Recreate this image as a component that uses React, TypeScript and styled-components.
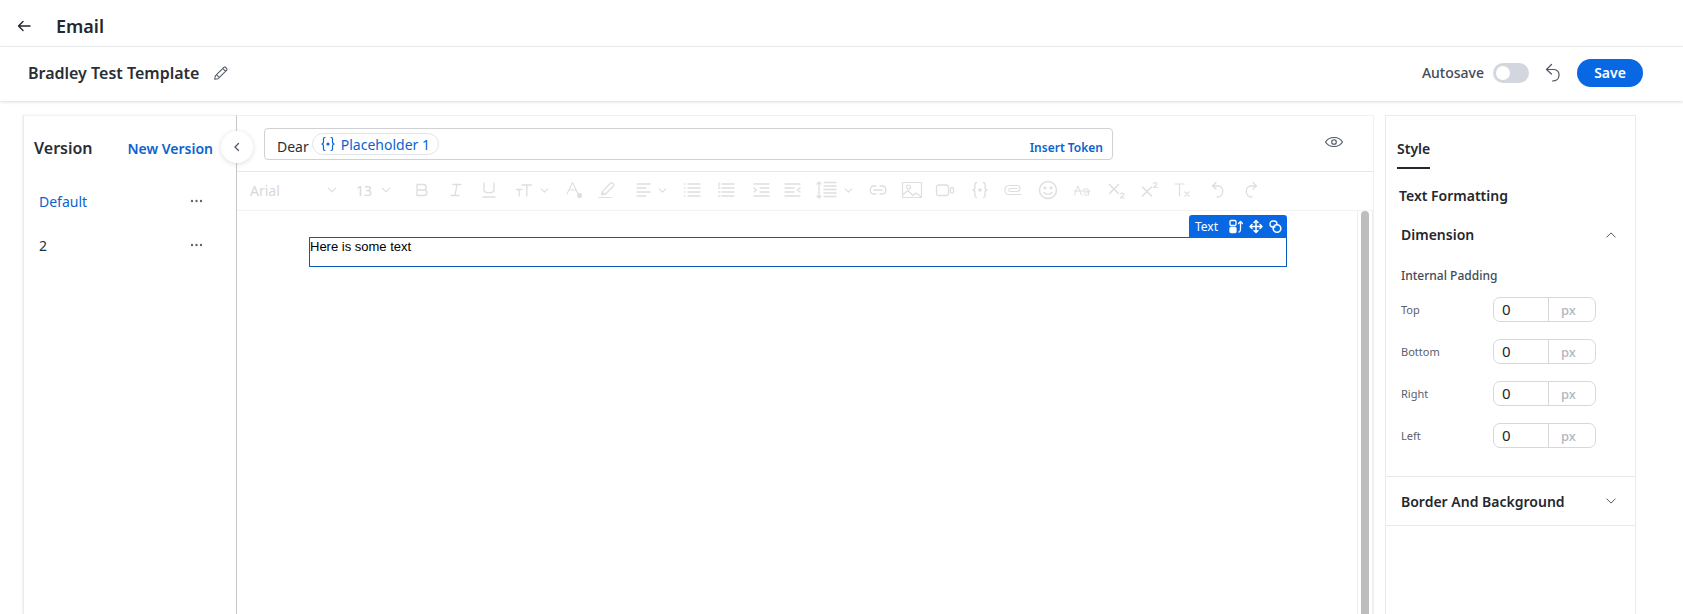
import React from "react";
import styled, { createGlobalStyle } from "styled-components";

const Global = createGlobalStyle`
  html, body { margin: 0; padding: 0; background: #fff; }
  body { font-family: "Noto Sans", "Open Sans", sans-serif; color: #23272e; }
  * { box-sizing: border-box; }
`;

const Page = styled.div`
  width: 1683px;
  height: 614px;
  overflow: hidden;
  display: flex;
  flex-direction: column;
`;
const TopBar = styled.header`
  height: 47px;
  flex: none;
  display: flex;
  align-items: center;
  padding: 5px 0 0 16px;
  gap: 24px;
  border-bottom: 1px solid #eef0f2;
`;
const PageTitle = styled.h1`
  margin: 0;
  font-size: 18px;
  line-height: 24px;
  font-weight: 600;
  color: #23272e;
`;
const TitleBar = styled.div`
  height: 54px;
  flex: none;
  display: flex;
  align-items: center;
  padding: 0 40px 3px 28px;
  box-shadow: 0 1px 3px rgba(30, 40, 60, 0.16);
  position: relative;
`;
const TemplateName = styled.h2`
  margin: 0 14px 0 0;
  font-size: 16px;
  line-height: 22px;
  font-weight: 600;
  color: #2a2e35;
`;
const IconSlot = styled.span`
  display: flex;
  color: #4e5663;
`;
const Spacer = styled.div`
  flex: 1;
`;
const AutosaveLabel = styled.span`
  font-size: 14px;
  font-weight: 500;
  color: #434a57;
  margin-right: 9px;
`;
const Toggle = styled.div`
  width: 36px;
  height: 20px;
  border-radius: 10px;
  background: #d3d6de;
  padding: 3px;
  margin-right: 15px;
`;
const Knob = styled.div`
  width: 14px;
  height: 14px;
  border-radius: 50%;
  background: #fff;
`;
const SaveButton = styled.button`
  width: 66px;
  height: 28px;
  border: 0;
  border-radius: 14px;
  margin-left: 15px;
  background: #0868e4;
  color: #fff;
  font: 600 14px "Noto Sans", sans-serif;
  padding: 0;
`;
const Workspace = styled.main`
  flex: 1;
  min-height: 0;
  display: flex;
  padding: 14px 48px 0 23px;
`;
const VersionPanel = styled.aside`
  width: 214px;
  flex: none;
  position: relative;
  border-top: 1px solid #f0f1f3;
  border-left: 1px solid #e9eaec;
  border-right: 1px solid #c6c8cc;
  box-shadow: -1px 0 2px rgba(30, 40, 60, 0.06);
  padding: 19px 0 0 10px;
`;
const VersionHead = styled.div`
  display: flex;
  align-items: center;
  height: 26px;
  padding-right: 23px;
  justify-content: space-between;
  margin-bottom: 18px;
`;
const VersionTitle = styled.span`
  font-size: 16px;
  font-weight: 600;
  color: #2a2e35;
`;
const NewVersion = styled.span`
  font-size: 14px;
  font-weight: 600;
  color: #0b63ce;
`;
const VersionRow = styled.div`
  height: 44px;
  display: flex;
  align-items: center;
  justify-content: space-between;
  padding: 0 33px 0 5px;
`;
const VersionName = styled.span<{ $active?: boolean }>`
  font-size: 14px;
  color: ${(p) => (p.$active ? "#0b63ce" : "#2a2e35")};
`;
const CollapseButton = styled.div`
  position: absolute;
  right: -17px;
  top: 15px;
  width: 32px;
  height: 32px;
  border-radius: 50%;
  background: #fff;
  box-shadow: 0 1px 5px rgba(30, 40, 60, 0.16);
  display: flex;
  align-items: center;
  justify-content: center;
  z-index: 2;
`;
const EditorColumn = styled.section`
  width: 1137px;
  flex: none;
  display: flex;
  flex-direction: column;
  border-top: 1px solid #f0f1f3;
  border-right: 1px solid #f0f1f3;
`;
const SubjectRow = styled.div`
  height: 56px;
  flex: none;
  display: flex;
  align-items: flex-start;
  padding: 12px 0 0 27px;
  border-bottom: 1px solid #e6e7e9;
`;
const SubjectBox = styled.div`
  width: 849px;
  height: 32px;
  border: 1px solid #cfd1d5;
  border-radius: 4px;
  display: flex;
  align-items: center;
  padding: 0 9px 0 12px;
`;
const Dear = styled.span`
  font-size: 14px;
  color: #2a2e35;
  margin-right: 3px;
  margin-top: 4px;
`;
const TokenChip = styled.span`
  height: 22px;
  width: 127px;
  border: 1px solid #e2e5ea;
  border-radius: 11px;
  display: flex;
  align-items: center;
  gap: 5px;
  padding-left: 7px;
  font-size: 14px;
  color: #0b63ce;
`;
const InsertToken = styled.span`
  margin-left: auto;
  margin-top: 6px;
  font-size: 12px;
  font-weight: 600;
  color: #0b63ce;
`;
const PreviewIcon = styled.div`
  margin: 6px 0 0 211px;
`;
const Toolbar = styled.div`
  height: 39px;
  flex: none;
  display: flex;
  align-items: center;
  padding: 0 0 2px 13px;
  border-bottom: 1px solid #f1f2f3;
  color: #dcdee0;
`;
const ToolItem = styled.div<{ $w: number; $gap: number }>`
  width: ${(p) => p.$w}px;
  margin-left: ${(p) => p.$gap}px;
  flex: none;
  height: 24px;
  display: flex;
  align-items: center;
  justify-content: center;
`;
const ToolText = styled.span`
  flex: none;
  font-size: 14px;
  color: #d6d8da;
`;
const FontName = styled(ToolText)`
  width: 75px;
`;
const Canvas = styled.div`
  flex: 1;
  min-height: 0;
  display: flex;
`;
const CanvasBody = styled.div`
  flex: 1;
  padding: 26px 70px 0 72px;
`;
const Selected = styled.div`
  position: relative;
  height: 30px;
  border: 1px solid #0b5cb8;
  font-family: "Liberation Sans", Arial, sans-serif;
  font-size: 13px;
  line-height: 17px;
  color: #000;
`;
const BlockTag = styled.div`
  position: absolute;
  right: -1px;
  bottom: 100%;
  width: 98px;
  height: 23px;
  background: #0868e4;
  border-radius: 3px 3px 0 0;
  display: flex;
  align-items: center;
  gap: 11px;
  padding-left: 6px;
  font-family: "Noto Sans", sans-serif;
  font-size: 12px;
  color: #fff;
`;
const ScrollTrack = styled.div`
  width: 16px;
  flex: none;
  border-left: 1px solid #eeeeee;
  border-right: 1px solid #eeeeee;
  padding: 0 3px;
`;
const ScrollThumb = styled.div`
  height: 100%;
  background: #bdbdbd;
  border-radius: 4px 4px 0 0;
`;
const StylePanel = styled.aside`
  width: 251px;
  flex: none;
  margin-left: 11px;
  border: 1px solid #e9ebef;
  border-bottom: 0;
  padding-top: 20px;
`;
const TabRow = styled.div`
  padding-left: 11px;
  height: 33px;
`;
const Tab = styled.div`
  display: inline-block;
  height: 33px;
  line-height: 26px;
  font-size: 14px;
  font-weight: 600;
  color: #23272e;
  border-bottom: 2px solid #23272e;
`;
const FormatHeading = styled.div`
  font-size: 14px;
  font-weight: 600;
  line-height: 20px;
  color: #23272e;
  padding-left: 13px;
  margin-top: 17px;
`;
const SectionHead = styled.div`
  display: flex;
  align-items: center;
  justify-content: space-between;
  padding: 0 17px 0 15px;
  font-size: 14px;
  font-weight: 600;
  color: #23272e;
`;
const DimensionBlock = styled.div`
  margin-top: 19px;
  padding-bottom: 28px;
  border-bottom: 1px solid #e6eaee;
`;
const PaddingLabel = styled.div`
  font-size: 12px;
  font-weight: 500;
  line-height: 16px;
  color: #434a57;
  padding-left: 15px;
  margin: 24px 0 13px;
`;
const FieldList = styled.div`
  display: flex;
  flex-direction: column;
  gap: 17px;
  padding-left: 15px;
`;
const FieldRow = styled.div`
  display: grid;
  grid-template-columns: 92px 103px;
  align-items: center;
`;
const FieldLabel = styled.span`
  font-size: 11px;
  color: #5a606b;
`;
const FieldBox = styled.div`
  height: 25px;
  border: 1px solid #d6d8dc;
  border-radius: 7px;
  display: grid;
  grid-template-columns: 55px 1fr;
  align-items: center;
`;
const FieldValue = styled.span`
  font-size: 15px;
  color: #23272e;
  padding-left: 8px;
  height: 100%;
  line-height: 23px;
  border-right: 1px solid #d6d8dc;
`;
const FieldUnit = styled.span`
  font-size: 13px;
  font-weight: 500;
  color: #b2b6be;
  padding-left: 12px;
`;
const BorderBlock = styled.div`
  height: 49px;
  display: flex;
  flex-direction: column;
  justify-content: center;
  border-bottom: 1px solid #e6eaee;
`;

const Ic = ({ w = 18, h = 18, vb, sw = 1.2, children }: { w?: number; h?: number; vb?: string; sw?: number; children: React.ReactNode }) => (
  <svg width={w} height={h} viewBox={vb ?? `0 0 ${w} ${h}`} fill="none" stroke="currentColor" strokeWidth={sw} strokeLinecap="round" strokeLinejoin="round">
    {children}
  </svg>
);

const Chev = ({ size = 10, sw = 1 }: { size?: number; sw?: number }) => (
  <Ic w={size} h={size} vb="0 0 10 10" sw={sw}>
    <path d="M2 3.5 5 6.5 8 3.5" />
  </Ic>
);

const Dots = () => (
  <svg width="13" height="4" viewBox="0 0 13 4" fill="#60666f">
    <circle cx="2" cy="2" r="1.2" />
    <circle cx="6.5" cy="2" r="1.2" />
    <circle cx="11" cy="2" r="1.2" />
  </svg>
);

const Braces = ({ size = 16 }: { size?: number }) => (
  <Ic w={size} h={size} vb="0 0 16 16" sw={1.2}>
    <path d="M5 1.5C3 1.5 3.5 3.5 3.5 5.5 3.5 7 3 8 1.8 8 3 8 3.5 9 3.5 10.5 3.5 12.5 3 14.5 5 14.5" />
    <path d="M11 1.5C13 1.5 12.5 3.5 12.5 5.5 12.5 7 13 8 14.2 8 13 8 12.5 9 12.5 10.5 12.5 12.5 13 14.5 11 14.5" />
    <circle cx="8" cy="8" r="1" fill="currentColor" />
  </Ic>
);

const Field = ({ label }: { label: string }) => (
  <FieldRow>
    <FieldLabel>{label}</FieldLabel>
    <FieldBox>
      <FieldValue>0</FieldValue>
      <FieldUnit>px</FieldUnit>
    </FieldBox>
  </FieldRow>
);

const tools: { c: number; w: number; node: React.ReactNode }[] = [
  { c: 332, w: 12, node: <Chev size={12} /> },
  { c: 364, w: 20, node: <ToolText>13</ToolText> },
  { c: 386, w: 12, node: <Chev size={12} /> },
  {
    c: 422,
    w: 16,
    node: (
      <Ic w={16} h={16} sw={1.3}>
        <path d="M3 2.5H9.5C13 2.5 13 8 9.5 8H3V2.5ZM3 8H10C14 8 14 13.5 10 13.5H3V8Z" />
      </Ic>
    ),
  },
  {
    c: 456,
    w: 16,
    node: (
      <Ic w={16} h={16} sw={1.3}>
        <path d="M5 2.5H13M3 13.5H11M9 2.5 7 13.5" />
      </Ic>
    ),
  },
  {
    c: 489,
    w: 16,
    node: (
      <Ic w={16} h={18} sw={1.3}>
        <path d="M3 2V8.5C3 13 13 13 13 8.5V2M2 16H14" />
      </Ic>
    ),
  },
  {
    c: 524,
    w: 18,
    node: (
      <Ic w={18} h={16} sw={1.3}>
        <path d="M1.5 7.5H7M4.2 7.5V14M7 3H16.5M11.8 3V14" />
      </Ic>
    ),
  },
  { c: 544, w: 11, node: <Chev size={11} /> },
  {
    c: 574,
    w: 18,
    node: (
      <Ic w={18} h={18} sw={1.1}>
        <path d="M2 13 7.5 1.5 13 13M4 9H11" />
        <circle cx="14.5" cy="14.5" r="2" fill="currentColor" />
      </Ic>
    ),
  },
  {
    c: 607,
    w: 20,
    node: (
      <Ic w={20} h={18} sw={1.1}>
        <path d="M5 11 13.5 2C15 .8 18 3.5 16.5 5L8 13.5 4.5 14ZM5 11 8 13.5M2 16.5H14" />
      </Ic>
    ),
  },
  {
    c: 643,
    w: 16,
    node: (
      <Ic w={16} h={16} sw={1.3}>
        <path d="M2 2H15M2 6H11M2 10H15M2 14H11" />
      </Ic>
    ),
  },
  { c: 662, w: 11, node: <Chev size={11} /> },
  {
    c: 692,
    w: 18,
    node: (
      <Ic w={18} h={16} sw={1.3}>
        <path d="M5 2H17M5 6H17M5 10H17M5 14H17M1.5 2H2M1.5 6H2M1.5 10H2M1.5 14H2" />
      </Ic>
    ),
  },
  {
    c: 726,
    w: 18,
    node: (
      <Ic w={18} h={16} sw={1.3}>
        <path d="M5 2H17M5 6H17M5 10H17M5 14H17M2 1V4M1.5 6H3M1.5 10H3M1.5 14H3" />
      </Ic>
    ),
  },
  {
    c: 761,
    w: 18,
    node: (
      <Ic w={18} h={16} sw={1.3}>
        <path d="M2 2H17M8 6H17M8 10H17M2 14H17M2 6 4.5 8 2 10" />
      </Ic>
    ),
  },
  {
    c: 793,
    w: 18,
    node: (
      <Ic w={18} h={16} sw={1.3}>
        <path d="M1 2H16M1 6H10M1 10H10M1 14H16M16 6 13.5 8 16 10" />
      </Ic>
    ),
  },
  {
    c: 827,
    w: 22,
    node: (
      <Ic w={22} h={22} sw={1.3}>
        <path d="M3 3V19M1 5 3 3 5 5M1 17 3 19 5 17M8 3.5H20M8 7H20M8 10.5H20M8 14H20M8 17.5H20" />
      </Ic>
    ),
  },
  { c: 848, w: 11, node: <Chev size={11} /> },
  {
    c: 878,
    w: 20,
    node: (
      <Ic w={20} h={14} sw={1.3}>
        <path d="M8 3H6C1 3 1 11 6 11H8M12 3H14C19 3 19 11 14 11H12M6 7H14" />
      </Ic>
    ),
  },
  {
    c: 912,
    w: 22,
    node: (
      <Ic w={22} h={18} sw={1.2}>
        <rect x="1.5" y="1.5" width="19" height="15" />
        <circle cx="7.5" cy="6" r="2" />
        <path d="M1.5 14 7 9.5 12 14.5 15 12 20.5 16" />
      </Ic>
    ),
  },
  {
    c: 945,
    w: 20,
    node: (
      <Ic w={20} h={14} sw={1.3}>
        <rect x="1.5" y="2" width="12" height="10.5" rx="2" />
        <path d="M15.5 5.5C15.5 4 18.5 4 18.5 5.5V9C18.5 10.5 15.5 10.5 15.5 9Z" />
      </Ic>
    ),
  },
  { c: 980, w: 18, node: <Braces size={18} /> },
  {
    c: 1013,
    w: 20,
    node: (
      <Ic w={20} h={14} sw={1.1}>
        <path d="M18 11.5H6C.5 11.5 .5 2.5 6 2.5H14C18 2.5 18 8.5 14 8.5H7.5C5 8.5 5 5.5 7.5 5.5H14" />
      </Ic>
    ),
  },
  {
    c: 1048,
    w: 20,
    node: (
      <Ic w={20} h={20} sw={1.4}>
        <circle cx="10" cy="10" r="8.5" />
        <circle cx="7" cy="8" r=".7" fill="currentColor" />
        <circle cx="13" cy="8" r=".7" fill="currentColor" />
        <path d="M6 12.5C8 15 12 15 14 12.5" />
      </Ic>
    ),
  },
  {
    c: 1082,
    w: 18,
    node: (
      <Ic w={18} h={14} sw={1}>
        <path d="M1.5 12 5 3 8.5 12M1 8H17M10.5 6.5C12 5 15.5 5.5 15.5 7.5V12M15.5 9C11.5 8 9.5 12.5 13 12.3 14.3 12.2 15.5 11.5 15.5 10.5" />
      </Ic>
    ),
  },
  {
    c: 1117,
    w: 18,
    node: (
      <Ic w={18} h={18} sw={1.5}>
        <path d="M1.5 3.5 10.5 12.5M10.5 3.5 1.5 12.5" />
        <path d="M12.5 13C13 11.8 16 11.8 16 13.4 16 14.5 13.5 15.5 12.5 17H16.5" strokeWidth={1.1} />
      </Ic>
    ),
  },
  {
    c: 1150,
    w: 18,
    node: (
      <Ic w={18} h={18} sw={1.5}>
        <path d="M1.5 6 10.5 15M10.5 6 1.5 15" />
        <path d="M12.5 2.5C13 1.3 16 1.3 16 2.9 16 4 13.5 5 12.5 6.5H16.5" strokeWidth={1.1} />
      </Ic>
    ),
  },
  {
    c: 1183,
    w: 18,
    node: (
      <Ic w={18} h={16} sw={1.2}>
        <path d="M1 2H10M5.5 2V14M11 10 15 14M15 10 11 14" />
      </Ic>
    ),
  },
  {
    c: 1218,
    w: 16,
    node: (
      <Ic w={16} h={18} sw={1.3}>
        <path d="M6 1.5 2.5 5 6 8M2.5 5H8C14.5 5 14.5 16 7 16" />
      </Ic>
    ),
  },
  {
    c: 1251,
    w: 16,
    node: (
      <Ic w={16} h={18} sw={1.3}>
        <path d="M10 1.5 13.5 5 10 8M13.5 5H8C1.5 5 1.5 16 9 16" />
      </Ic>
    ),
  },
];

const placedTools = tools.reduce<{ end: number; items: { gap: number; w: number; node: React.ReactNode }[] }>(
  (acc, t) => {
    const start = t.c - t.w / 2;
    acc.items.push({ gap: start - acc.end, w: t.w, node: t.node });
    acc.end = start + t.w;
    return acc;
  },
  { end: 325, items: [] },
).items;

export default function App() {
  return (
    <Page>
      <Global />
      <TopBar>
        <Ic w={16} h={16} sw={1.4}>
          <path d="M14 8H2.5M7 3.5 2.5 8 7 12.5" />
        </Ic>
        <PageTitle>Email</PageTitle>
      </TopBar>
      <TitleBar>
        <TemplateName>Bradley Test Template</TemplateName>
        <IconSlot>
          <Ic w={16} h={16} vb="0 0 14 14" sw={0.9}>
            <path d="M2 9.5 9.5 2C10.5 1 13 3.5 12 4.5L4.5 12 1.5 12.5ZM8.5 3 11 5.5M3 8.5 5.5 11" />
          </Ic>
        </IconSlot>
        <Spacer />
        <AutosaveLabel>Autosave</AutosaveLabel>
        <Toggle>
          <Knob />
        </Toggle>
        <IconSlot>
          <Ic w={18} h={20} sw={1.2}>
            <path d="M7.5 1.5 2.5 6.5 7.5 11M2.5 6.5H10C17 6.5 17 18 8.5 18" />
          </Ic>
        </IconSlot>
        <SaveButton>Save</SaveButton>
      </TitleBar>
      <Workspace>
        <VersionPanel>
          <VersionHead>
            <VersionTitle>Version</VersionTitle>
            <NewVersion>New Version</NewVersion>
          </VersionHead>
          <VersionRow>
            <VersionName $active>Default</VersionName>
            <Dots />
          </VersionRow>
          <VersionRow>
            <VersionName>2</VersionName>
            <Dots />
          </VersionRow>
          <CollapseButton>
            <IconSlot>
              <Ic w={10} h={12} sw={1.3}>
                <path d="M6.5 2.5 3 6 6.5 9.5" />
              </Ic>
            </IconSlot>
          </CollapseButton>
        </VersionPanel>
        <EditorColumn>
          <SubjectRow>
            <SubjectBox>
              <Dear>Dear</Dear>
              <TokenChip>
                <Braces size={16} />
                Placeholder 1
              </TokenChip>
              <InsertToken>Insert Token</InsertToken>
            </SubjectBox>
            <PreviewIcon>
              <IconSlot>
                <Ic w={20} h={16} sw={1.1}>
                  <path d="M1.5 8C5 2 15 2 18.5 8 15 14 5 14 1.5 8Z" />
                  <circle cx="10" cy="8" r="2.3" />
                </Ic>
              </IconSlot>
            </PreviewIcon>
          </SubjectRow>
          <Toolbar>
            <FontName>Arial</FontName>
            {placedTools.map((t, i) => (
              <ToolItem key={i} $w={t.w} $gap={t.gap}>
                {t.node}
              </ToolItem>
            ))}
          </Toolbar>
          <Canvas>
            <CanvasBody>
              <Selected>
                Here is some text
                <BlockTag>
                  Text
                  <svg width="55" height="15" viewBox="0 0 55 15" fill="none" stroke="#fff" strokeWidth="1.3" strokeLinecap="round" strokeLinejoin="round">
                    <rect x="1" y="1.5" width="6" height="5" rx="1" />
                    <rect x="1" y="8.5" width="6" height="5" rx="1" fill="#fff" />
                    <path d="M10 13C11.5 13 11.5 11 11.5 9V2.5M9.5 4.5 11.5 2.5 13.5 4.5" />
                    <path d="M27 2V13M21.5 7.5H32.5M25 3.5 27 1.5 29 3.5M25 11.5 27 13.5 29 11.5M23 5.5 21 7.5 23 9.5M31 5.5 33 7.5 31 9.5" strokeWidth="1.5" />
                    <path d="M46 8H44C40 8 40 2 44 2H45C47 2 48 3.5 48 5" />
                    <circle cx="48" cy="9.5" r="3.8" strokeWidth="1.6" />
                  </svg>
                </BlockTag>
              </Selected>
            </CanvasBody>
            <ScrollTrack>
              <ScrollThumb />
            </ScrollTrack>
          </Canvas>
        </EditorColumn>
        <StylePanel>
          <TabRow>
            <Tab>Style</Tab>
          </TabRow>
          <FormatHeading>Text Formatting</FormatHeading>
          <DimensionBlock>
            <SectionHead>
              Dimension
              <IconSlot>
                <Ic w={14} h={14} vb="0 0 10 10" sw={0.7}>
                  <path d="M2 6.5 5 3.5 8 6.5" />
                </Ic>
              </IconSlot>
            </SectionHead>
            <PaddingLabel>Internal Padding</PaddingLabel>
            <FieldList>
              <Field label="Top" />
              <Field label="Bottom" />
              <Field label="Right" />
              <Field label="Left" />
            </FieldList>
          </DimensionBlock>
          <BorderBlock>
            <SectionHead>
              Border And Background
              <IconSlot>
                <Chev size={14} sw={0.7} />
              </IconSlot>
            </SectionHead>
          </BorderBlock>
        </StylePanel>
      </Workspace>
    </Page>
  );
}
